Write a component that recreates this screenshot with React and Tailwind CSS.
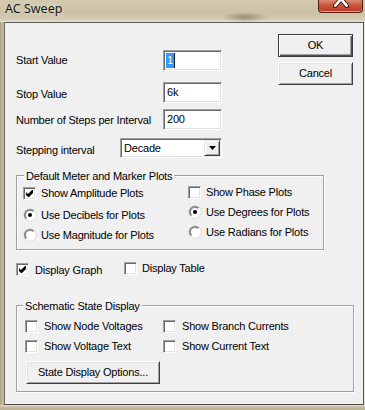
import React from "react";

const sunken =
  "bg-white border border-t-[#a0a0a0] border-l-[#a0a0a0] border-r-white border-b-white shadow-[inset_1px_1px_0_#696969,inset_-1px_-1px_0_#e3e3e3]";

function CheckBox({ checked }) {
  return (
    <span className={"w-[13px] h-[13px] shrink-0 flex items-center justify-center " + sunken}>
      {checked && (
        <svg width="7" height="7" viewBox="0 0 7 7">
          <polygon points="0,2 2,4 6,0 7,0 7,3 3,7 2,7 0,5" fill="#000" />
        </svg>
      )}
    </span>
  );
}

function Radio({ checked }) {
  return (
    <span className="w-[12px] h-[12px] shrink-0 rounded-full bg-white border-2 border-t-[#8a8a8a] border-l-[#8a8a8a] border-r-[#ffffff] border-b-[#ffffff] shadow-[0_0_0_0.5px_#c8c8c8] flex items-center justify-center">
      {checked && <span className="w-[4px] h-[4px] rounded-full bg-black" />}
    </span>
  );
}

function CheckItem({ checked, label }) {
  return (
    <div className="flex items-center h-[20px]">
      <CheckBox checked={checked} />
      <span className="ml-[5px] leading-[13px] whitespace-nowrap">{label}</span>
    </div>
  );
}

function RadioItem({ checked, label }) {
  return (
    <div className="flex items-center h-[20px]">
      <span className="ml-[1px] flex">
        <Radio checked={checked} />
      </span>
      <span className="ml-[5px] leading-[13px] whitespace-nowrap">{label}</span>
    </div>
  );
}

function CloseBtn() {
  return (
    <div className="mr-[2px] w-[45px] h-[13px] rounded-b-[4px] border border-t-0 border-[#5b1d12] bg-[linear-gradient(180deg,#d98a76_0%,#c9533b_45%,#b83b25_100%)] shadow-[inset_0_-1px_0_#e69a86] flex justify-center overflow-hidden">
      <svg width="16" height="8" viewBox="0 0 16 8">
        <path d="M8 -1 L2 6 M8 -1 L14 6" stroke="#4a1a10" strokeWidth="4.5" strokeLinecap="round" fill="none" />
        <path d="M8 -1 L2.3 5.6 M8 -1 L13.7 5.6" stroke="#ffffff" strokeWidth="2.6" strokeLinecap="round" fill="none" />
      </svg>
    </div>
  );
}

export default function App() {
  return (
    <div className="w-[365px] h-[410px] overflow-hidden flex flex-col text-[11px] tracking-[-0.2px] text-black font-['Liberation_Sans',Arial,sans-serif] bg-[linear-gradient(90deg,#a99f83_0px,#c1b79b_2px,#bdb397_4px,#c6bca0_100%)]">
      {/* title bar */}
      <div className="h-[22px] shrink-0 flex items-start justify-between bg-[radial-gradient(ellipse_24px_5px_at_245px_17px,#958d78,rgba(149,141,120,0)),linear-gradient(180deg,#d2c9ae_0%,#cbc2a6_60%,#d6cfb8_92%,#ebe6d6_100%)]">
        <span className="ml-[5px] mt-[0px] text-[12.5px] tracking-normal leading-[17px] text-[#1a1a1a] font-['Noto_Sans',sans-serif] [text-shadow:0_0_6px_rgba(255,255,240,0.8)]">
          AC Sweep
        </span>
        <CloseBtn />
      </div>

      {/* client area */}
      <div className="ml-[4px] mr-[1px] h-[383px] shrink-0 border border-[#4f4f4f] border-t-[#5a5a5a] border-l-[#6a6a6a] bg-[#f0f0f0] shadow-[1px_1px_0_#ece8dc]">
        <div className="flex flex-col pl-[11px]">
          {/* top section */}
          <div className="flex items-start">
            <div className="w-[206px] flex flex-col">
              <div className="mt-[27px] h-[21px] flex items-center justify-between">
                <span className="leading-[13px]">Start Value</span>
                <div className={"w-[59px] h-full flex items-center pl-[2px] " + sunken}>
                  <span className="bg-[#3399ff] text-white leading-[15px] px-[1px]">1</span>
                  <span className="w-[1px] h-[15px] bg-[#1b1b1b]" />
                </div>
              </div>
              <div className="mt-[11px] h-[21px] flex items-center justify-between">
                <span className="leading-[13px] pt-[3px]">Stop Value</span>
                <div className={"w-[59px] h-full flex items-center pl-[3px] " + sunken}>
                  <span className="leading-[13px]">6k</span>
                </div>
              </div>
              <div className="mt-[6px] h-[21px] flex items-center justify-between">
                <span className="leading-[13px] pt-[1px] whitespace-nowrap">Number of Steps per Interval</span>
                <div className={"w-[59px] h-full flex items-center pl-[3px] " + sunken}>
                  <span className="leading-[13px]">200</span>
                </div>
              </div>
              <div className="mt-[8px] h-[20px] flex items-center justify-between">
                <span className="leading-[13px] pt-[4px]">Stepping interval</span>
                <div className={"w-[102px] h-full flex items-center justify-between pl-[3px] pr-[1px] " + sunken}>
                  <span className="leading-[13px]">Decade</span>
                  <span className="w-[16px] h-[16px] bg-[#f0f0f0] border border-t-[#e3e3e3] border-l-[#e3e3e3] border-r-[#404040] border-b-[#404040] shadow-[inset_1px_1px_0_#ffffff,inset_-1px_-1px_0_#a0a0a0] flex items-center justify-center">
                    <svg width="7" height="4" viewBox="0 0 7 4">
                      <polygon points="0,0 7,0 3.5,4" fill="#000" />
                    </svg>
                  </span>
                </div>
              </div>
            </div>

            <div className="ml-[56px] mt-[11px] flex flex-col">
              <button className="w-[75px] h-[23px] bg-[#f0f0f0] border border-[#3c3c3c] shadow-[inset_1px_1px_0_#ffffff,inset_-1px_-1px_0_#505050,inset_-2px_-2px_0_#a0a0a0] flex items-center justify-center leading-[13px]">
                OK
              </button>
              <button className="mt-[5px] w-[75px] h-[23px] bg-[#f0f0f0] border border-t-[#ffffff] border-l-[#ffffff] border-r-[#404040] border-b-[#404040] shadow-[inset_1px_1px_0_#e3e3e3,inset_-1px_-1px_0_#a0a0a0] flex items-center justify-center leading-[13px]">
                Cancel
              </button>
            </div>
          </div>

          {/* group 1 */}
          <div className="relative mt-[17px] w-[308px] h-[75px] border border-[#a0a0a0] shadow-[inset_1px_1px_0_#ffffff,1px_1px_0_#ffffff] flex pl-[6px]">
            <span className="absolute left-[7px] top-[-6px] px-[2px] bg-[#f0f0f0] leading-[13px] whitespace-nowrap">
              Default Meter and Marker Plots
            </span>
            <div className="w-[165px] flex flex-col pt-[7px]">
              <CheckItem checked label="Show Amplitude Plots" />
              <div className="mt-[2px]">
                <RadioItem checked label="Use Decibels for Plots" />
              </div>
              <RadioItem label="Use Magnitude for Plots" />
            </div>
            <div className="flex flex-col pt-[6px]">
              <CheckItem label="Show Phase Plots" />
              <RadioItem checked label="Use Degrees for Plots" />
              <RadioItem label="Use Radians for Plots" />
            </div>
          </div>

          {/* display row */}
          <div className="flex items-start h-[26px]">
            <div className="w-[108px] mt-[13px] flex items-center h-[13px]">
              <CheckBox checked />
              <span className="ml-[6px] leading-[13px] pt-[1px]">Display Graph</span>
            </div>
            <div className="mt-[12px] flex items-center h-[13px]">
              <CheckBox />
              <span className="ml-[5px] leading-[13px]">Display Table</span>
            </div>
          </div>

          {/* group 2 */}
          <div className="relative mt-[29px] w-[338px] h-[87px] border border-[#a0a0a0] shadow-[inset_1px_1px_0_#ffffff,1px_1px_0_#ffffff] flex flex-col pl-[8px]">
            <span className="absolute left-[6px] top-[-6px] px-[2px] bg-[#f0f0f0] leading-[13px] whitespace-nowrap">
              Schematic State Display
            </span>
            <div className="mt-[14px] flex h-[13px] items-center">
              <div className="w-[138px] flex items-center">
                <CheckBox />
                <span className="ml-[6px] leading-[13px]">Show Node Voltages</span>
              </div>
              <div className="flex items-center">
                <CheckBox />
                <span className="ml-[6px] leading-[13px]">Show Branch Currents</span>
              </div>
            </div>
            <div className="mt-[7px] flex h-[13px] items-center">
              <div className="w-[138px] flex items-center">
                <CheckBox />
                <span className="ml-[6px] leading-[13px]">Show Voltage Text</span>
              </div>
              <div className="flex items-center">
                <CheckBox />
                <span className="ml-[6px] leading-[13px]">Show Current Text</span>
              </div>
            </div>
            <button className="mt-[8px] ml-[1px] w-[134px] h-[23px] bg-[#f0f0f0] border border-t-[#ffffff] border-l-[#ffffff] border-r-[#404040] border-b-[#404040] shadow-[inset_1px_1px_0_#e3e3e3,inset_-1px_-1px_0_#a0a0a0] flex items-center justify-center leading-[13px]">
              State Display Options...
            </button>
          </div>
        </div>
      </div>

      {/* bottom frame */}
      <div className="flex-1 bg-[linear-gradient(180deg,#e2dccb_0px,#c9bfa3_2px,#b7ad91_100%)]" />
    </div>
  );
}
